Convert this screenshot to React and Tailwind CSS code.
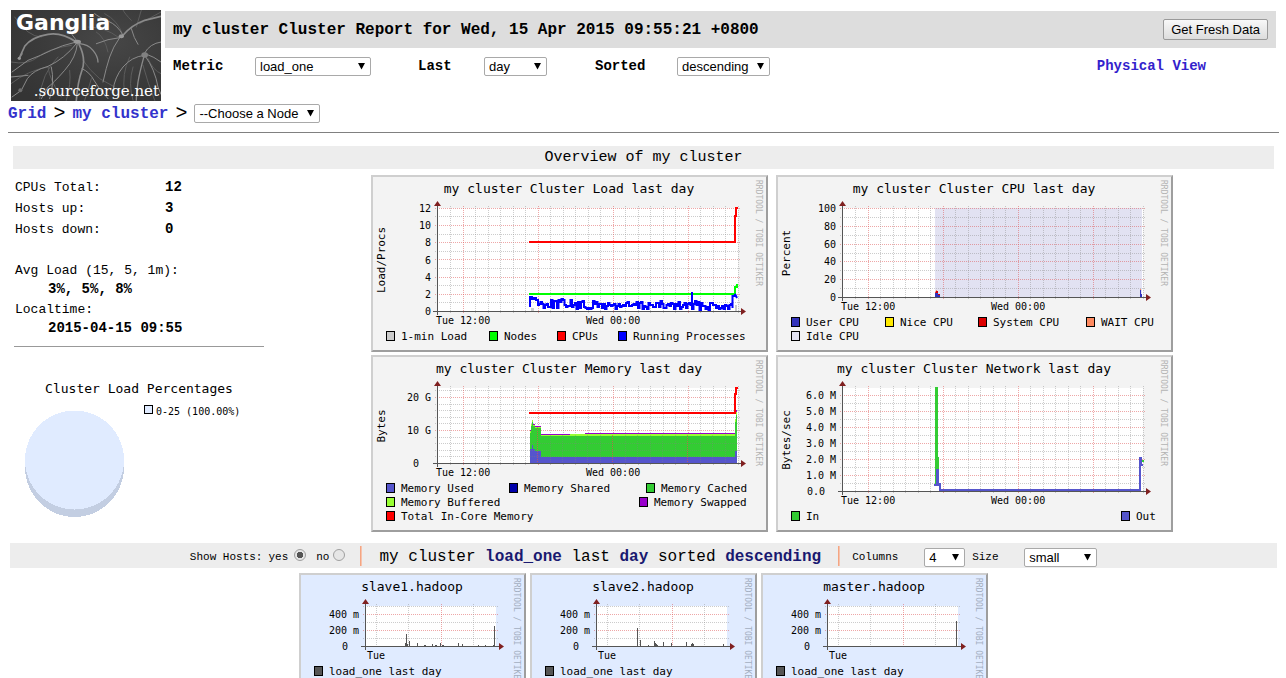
import React, { useState } from 'react';

const MONO = 'DejaVu Sans Mono, monospace';

// Small deterministic generator for the process count line
const buildRunningLine = () => {
    let seed = 7;
    const rand = () => {
        seed = (seed * 1103515245 + 12345) % 2147483648;
        return seed / 2147483648;
    };
    let path = 'M159 132V122H161V124H163V123H165V125H167V130';
    for (let x = 168; x < 362; x += 1.5) {
        const base = x < 200 ? 129 : 131;
        const y = Math.min(135, Math.round(base - 5 + rand() * 9));
        path += `H${x}V${y}`;
        if (x === 321) path += 'V117V134';
    }
    return path + 'V121H364V119L366 123';
};

const runningLine = buildRunningLine();

const Select = ({ id, options, className, ...props }) => (
    <span className={`relative inline-block h-[19px] ${className}`}>
        <select
            id={id}
            className="block w-full h-full appearance-none border border-[#a9a9a9] rounded-xs bg-white pl-1 text-[13px] leading-[17px] font-normal font-['Liberation_Sans',Arial,sans-serif] text-black"
            {...props}
        >
            {options.map((option) => (
                <option key={option}>{option}</option>
            ))}
        </select>
        <svg className="absolute right-1.5 top-1.5 pointer-events-none" width="7" height="7" viewBox="0 0 7 7">
            <path d="M0 0H7L3.5 6.5Z" fill="#000" />
        </svg>
    </span>
);

const Logo = () => (
    <svg width="150" height="91" viewBox="0 0 150 91" className="block shrink-0" role="img" aria-label="Ganglia">
        <defs>
            <radialGradient id="logoBg" cx="0.65" cy="0.35" r="0.8">
                <stop offset="0" stopColor="#474747" />
                <stop offset="0.6" stopColor="#3a3a3a" />
                <stop offset="1" stopColor="#343434" />
            </radialGradient>
        </defs>
        <rect width="150" height="91" fill="url(#logoBg)" />
        <svg width="150" height="91" viewBox="9 9 450 273" fill="none" stroke="#8a8a8a" strokeWidth="3" strokeLinecap="round">
            <g stroke="#5c5c5c">
                <path d="M9 165Q60 175 90 150T190 115" />
                <path d="M9 230Q60 190 120 180" />
                <path d="M120 180Q125 220 160 270" />
                <path d="M150 150Q100 200 95 275" />
                <path d="M225 160Q245 190 275 215L320 240" />
                <path d="M300 135Q290 90 265 75" />
                <path d="M370 40Q350 20 345 9" />
                <path d="M385 60L400 9M395 50L459 15" />
                <path d="M365 150Q340 200 350 260" />
                <path d="M420 155Q435 190 459 200" />
                <path d="M240 60Q290 60 330 90" />
                <path d="M290 20Q330 40 345 85" />
                <path d="M20 30Q60 90 100 90" />
                <path d="M185 190Q190 230 175 280M250 215Q240 250 230 280" />
                <path d="M375 180Q360 230 375 280M405 175Q420 230 440 280" />
            </g>
            <path d="M205 105Q160 75 120 82Q70 90 50 118L33 155L42 140" strokeWidth="5" />
            <path d="M205 105Q160 115 130 130T60 160L12 195" />
            <path d="M205 110Q170 155 120 178Q75 190 58 215L40 250L12 270" />
            <path d="M208 110Q205 150 170 190T120 240L100 275" />
            <path d="M213 112Q235 155 222 190T205 280" strokeWidth="5" />
            <path d="M222 185Q245 195 258 220T300 275" />
            <path d="M215 110Q240 112 255 130T270 165" strokeWidth="4" />
            <path d="M205 100Q190 85 185 65" />
            <path d="M335 92Q315 120 305 150T285 225" />
            <path d="M335 92Q300 95 265 110" />
            <path d="M345 85Q330 55 300 42T260 20" />
            <path d="M345 85Q370 55 410 40L459 28" strokeWidth="5" />
            <path d="M370 65Q378 95 390 112" />
            <path d="M408 145Q370 150 345 180T315 250" />
            <path d="M408 148Q395 195 390 225T385 280" strokeWidth="4" />
            <path d="M412 148Q440 185 450 240L459 262" />
            <path d="M412 140Q440 150 459 165M410 138Q425 110 459 105" />
            <path d="M60 205L9 210M130 180Q140 225 125 275" />
            <g fill="#989898" stroke="none">
                <ellipse cx="208" cy="104" rx="11" ry="6" />
                <ellipse cx="340" cy="88" rx="8" ry="6" />
                <ellipse cx="410" cy="144" rx="10" ry="8" fill="#808080" />
                <circle cx="34" cy="154" r="5" />
                <circle cx="37" cy="250" r="6" fill="#6e6e6e" />
            </g>
        </svg>
        <text x="5" y="20" fontSize="22" fontWeight="bold" fontFamily="DejaVu Sans, sans-serif" fill="#fff">Ganglia</text>
        <text x="148" y="86" fontSize="15" textAnchor="end" fontFamily="DejaVu Serif, serif" fill="#fff">.sourceforge.net</text>
    </svg>
);

// Plot background, axes and titles shared by every graph
const Graph = ({ width, height, bg, title, vertical, plot, rows, cols, labels, times, legend, under, children }) => {
    const { left, right, top, bottom } = plot;
    return (
        <div className={`border-2 border-t-[#cfcfcf] border-l-[#cfcfcf] border-b-[#9e9e9e] border-r-[#9e9e9e] ${bg}`}>
            <svg
                width={width - 4}
                height={height - 4}
                viewBox={`2 2 ${width - 4} ${height - 4}`}
                className="block"
                fontFamily={MONO}
                fontSize="10"
                role="img"
                aria-label={title}
            >
                <rect x={left} y={top} width={right - left} height={bottom - top} fill="#fff" />
                {under}
                <g shapeRendering="crispEdges" strokeDasharray="1 1">
                    {rows.map(([y, major]) => (
                        <path key={y} d={`M${left - 2} ${y + 0.5}H${right + 2}`} stroke={major ? '#de5050' : '#8f8f8f'} strokeOpacity={major ? 0.5 : 0.45} />
                    ))}
                    {cols.map(([x, major]) => (
                        <path key={x} d={`M${x + 0.5} ${top - 2}V${bottom + 2}`} stroke={major ? '#de5050' : '#8f8f8f'} strokeOpacity={major ? 0.5 : 0.45} />
                    ))}
                </g>
                <path d={`M${left - 4} ${bottom + 0.5}H${right + 4}M${left + 0.5} ${top - 4}V${bottom + 4}`} stroke="#555" fill="none" />
                {children}
                <path d={`M${left + 0.5} ${top - 7}l3.5 5h-7zM${right + 8} ${bottom + 0.5}l-5 -3.5v7z`} fill="#802020" />
                <text x={width > 300 ? 198 : 113} y="18" fontSize={13} textAnchor="middle">{title}</text>
                {vertical && (
                    <text transform={`translate(14 ${vertical.y}) rotate(-90)`} fontSize="11" textAnchor="middle">{vertical.text}</text>
                )}
                {labels.map(([text, x, y]) => (
                    <text key={text} x={x} y={y} textAnchor="end">{text}</text>
                ))}
                {times.map(([text, x]) => (
                    <text key={text} x={x} y={bottom + 13}>{text}</text>
                ))}
                {legend.map(([text, color, x, y]) => (
                    <g key={text} fontSize="11">
                        <rect x={x + 0.5} y={y - 8.5} width="8" height="9" fill={color} stroke="#000" />
                        <text x={x + 15} y={y}>{text}</text>
                    </g>
                ))}
                <text transform={`translate(${width - 12} 5) rotate(90)`} fontSize="8" fill={width > 300 ? '#b4b4b4' : '#a3aebf'}>RRDTOOL / TOBI OETIKER</text>
            </svg>
        </div>
    );
};

const dayCols = Array.from({ length: 24 }, (_, i) => [Math.round(79 + 12.5 * i), i % 6 === 1]);
const dayTimes = [['Tue 12:00', 65], ['Wed 00:00', 215]];

const gridRows = (bottom, step, count, majorEvery) =>
    Array.from({ length: count }, (_, i) => [Math.round(bottom - step * (i + 1)), (i + 1) % majorEvery === 0]);

const LoadGraph = () => (
    <Graph
        width={397}
        height={177}
        bg="bg-[#f3f3f3]"
        title="my cluster Cluster Load last day"
        vertical={{ text: 'Load/Procs', y: 85 }}
        plot={{ left: 66, right: 367, top: 33, bottom: 136 }}
        rows={gridRows(136, 8.6, 12, 2)}
        cols={dayCols}
        labels={[['12', 60, 37], ['10', 60, 54], ['8', 60, 71], ['6', 60, 89], ['4', 60, 106], ['2', 60, 123], ['0', 60, 140]]}
        times={dayTimes}
        legend={[
            ['1-min Load', '#cccccc', 15, 165],
            ['Nodes', '#00ff00', 118, 165],
            ['CPUs', '#ff0000', 186, 165],
            ['Running Processes', '#0000ff', 247, 165],
        ]}
    >
        <g fill="none" strokeWidth="2">
            <path d="M160 136v-3h3v3M364 136v-6h2v6" fill="#ccc" stroke="none" />
            <path d="M158 119H364V112H366V109" stroke="#00ff00" />
            <path d={runningLine} stroke="#0000ff" />
            <path d="M158 67H364V41H365V33H367" stroke="#ff0000" />
        </g>
    </Graph>
);

const CpuGraph = () => (
    <Graph
        width={397}
        height={177}
        bg="bg-[#f3f3f3]"
        title="my cluster Cluster CPU last day"
        vertical={{ text: 'Percent', y: 78 }}
        plot={{ left: 66, right: 367, top: 33, bottom: 122 }}
        rows={gridRows(122, 8.9, 10, 2)}
        cols={dayCols}
        labels={[['100', 60, 37], ['80', 60, 55], ['60', 60, 73], ['40', 60, 90], ['20', 60, 108], ['0', 60, 126]]}
        times={dayTimes}
        legend={[
            ['User CPU', '#3333bb', 15, 151],
            ['Nice CPU', '#ffea00', 109, 151],
            ['System CPU', '#dd0000', 202, 151],
            ['WAIT CPU', '#ff8a60', 310, 151],
            ['Idle CPU', '#e2e2f2', 15, 165],
        ]}
        under={<rect x="159" y="33" width="207" height="89" fill="#e2e2f2" />}
    >
        <path d="M159 122v-4l1 -2h2v3h2v3z" fill="#dd0000" />
        <path d="M160 115h1v1h-1zM364 114h1v1h-1z" fill="#ff8a60" />
        <path d="M159 122v-4h3v2h2v2zM364 122v-7h1v4h1v3z" fill="#3333bb" />
    </Graph>
);

const MemoryGraph = () => (
    <Graph
        width={397}
        height={177}
        bg="bg-[#f3f3f3]"
        title="my cluster Cluster Memory last day"
        vertical={{ text: 'Bytes', y: 71 }}
        plot={{ left: 66, right: 367, top: 33, bottom: 108 }}
        rows={gridRows(108, 6.6, 11, 5)}
        cols={dayCols}
        labels={[['20 G', 60, 46], ['10 G', 60, 79], ['0', 48, 112]]}
        times={dayTimes}
        legend={[
            ['Memory Used', '#5555cc', 15, 137],
            ['Memory Shared', '#0000aa', 138, 137],
            ['Memory Cached', '#33cc33', 275, 137],
            ['Memory Buffered', '#99ff33', 15, 151],
            ['Memory Swapped', '#9900cc', 268, 151],
            ['Total In-Core Memory', '#ff0000', 15, 165],
        ]}
    >
        <g shapeRendering="crispEdges">
            <path d="M159 108V76H160V69H161V65H162V70H164V72H170V80H199V79H364V64H365V57H366V108Z" fill="#99ff33" />
            <path d="M159 108V78H160V71H161V67H162V71H164V73H170V81H364V67H365V60H366V108Z" fill="#33cc33" />
            <path d="M159 108V94H161V90H162V94H164V96H170V102H364V96H366V108Z" fill="#5555cc" />
            <path d="M159 75h1v1h-1zM162 69h2v1h-2zM164 71h6v1h-6zM170 79h29v1h-29zM214 78h150v1h-150zM365 55h1v2h-1z" fill="#9900cc" />
            <g strokeDasharray="1 1" stroke="#808080" strokeOpacity="0.35">
                <path d="M159 88.5H366M159 95.5H366M159 101.5H366" />
                <path d="M179.5 80V108M191.5 80V108M204.5 80V108M216.5 80V108M229.5 80V108M254.5 80V108M266.5 80V108M279.5 80V108M291.5 80V108M304.5 80V108M329.5 80V108M341.5 80V108M354.5 80V108" />
                <path d="M166.5 72V108M241.5 80V108M316.5 80V108" stroke="#de5050" strokeOpacity="0.7" />
            </g>
        </g>
        <path d="M158 58H364V39H365V33H367" stroke="#ff0000" strokeWidth="2" fill="none" />
    </Graph>
);

const NetworkGraph = () => (
    <Graph
        width={397}
        height={177}
        bg="bg-[#f3f3f3]"
        title="my cluster Cluster Network last day"
        vertical={{ text: 'Bytes/sec', y: 85 }}
        plot={{ left: 66, right: 367, top: 33, bottom: 136 }}
        rows={gridRows(136, 8, 12, 2)}
        cols={dayCols}
        labels={[['6.0 M', 60, 44], ['5.0 M', 60, 60], ['4.0 M', 60, 76], ['3.0 M', 60, 92], ['2.0 M', 60, 108], ['1.0 M', 60, 124], ['0.0', 49, 140]]}
        times={dayTimes}
        legend={[
            ['In', '#33cc33', 15, 165],
            ['Out', '#5555cc', 345, 165],
        ]}
    >
        <path d="M159 32h3v70h1v28h-4zM366 105h2v2h-2z" fill="#33cc33" />
        <path d="M160 114h3v16h-3z" fill="#5555cc" />
        <path d="M158 130H163V129H164V135H364V103H365V110H367" stroke="#5555cc" strokeWidth="2" fill="none" />
    </Graph>
);

const HostGraph = ({ host, bars }) => (
    <Graph
        width={227}
        height={122}
        bg="bg-[#e0ebff]"
        title={host}
        plot={{ left: 66, right: 197, top: 33, bottom: 73 }}
        rows={gridRows(73, 8, 5, 2)}
        cols={[[77, false], [109, false], [142, true], [174, false]]}
        labels={[['400 m', 60, 45], ['200 m', 60, 61], ['0', 49, 77]]}
        times={[['Tue', 68]]}
        legend={[['load_one last day', '#555555', 15, 102]]}
    >
        {bars.map(([x, h]) => (
            <rect key={x} x={x} y={73 - h} width="1" height={h} fill="#555" />
        ))}
    </Graph>
);

const hosts = [
    { name: 'slave1.hadoop', bars: [[106, 3], [107, 12], [108, 2], [110, 5], [118, 3], [125, 1], [126, 1], [133, 2], [136, 1], [137, 1], [141, 3], [143, 1], [144, 1], [159, 3], [163, 2], [179, 1], [186, 1], [194, 1], [195, 20]] },
    { name: 'slave2.hadoop', bars: [[107, 18], [110, 6], [118, 1], [124, 5], [125, 3], [126, 2], [127, 1], [133, 4], [141, 3], [156, 4], [161, 2], [162, 3], [163, 2], [193, 2]] },
    { name: 'master.hadoop', bars: [[195, 25]] },
];

const LoadPie = () => (
    <svg width="250" height="150" viewBox="0 0 250 150" className="block" fontFamily={MONO} role="img" aria-label="Cluster Load Percentages">
        <text x="125" y="22" fontSize="13" textAnchor="middle">Cluster Load Percentages</text>
        <rect x="130.5" y="34.5" width="8" height="8" fill="#e0ebff" stroke="#000" />
        <text x="142" y="44" fontSize="10">0-25 (100.00%)</text>
        <g shapeRendering="crispEdges">
            <path d="M11 89V96A49.5 50 0 0 0 110 96V89Z" fill="#c3cee2" />
            <circle cx="60.5" cy="89" r="49.5" fill="#e0ebff" />
        </g>
    </svg>
);

const Separator = ({ className }) => (
    <span className={`flex h-5 mb-[3px] ${className}`}>
        <span className="w-px bg-[#f4a582]" />
        <span className="w-px bg-[#f6c3ae]" />
    </span>
);

const App = () => {
    const [metric, setMetric] = useState('load_one');
    const [range, setRange] = useState('day');
    const [sorted, setSorted] = useState('descending');
    const [showHosts, setShowHosts] = useState('yes');

    return (
        <div className="bg-white text-black pl-2 pr-[7px] pt-[10px] font-['Liberation_Mono','Courier_New',monospace] overflow-hidden">
            {/* Header */}
            <div className="flex gap-1 mx-[3px]">
                <Logo />
                <div className="flex-1">
                    <div className="flex items-center justify-between h-[37px] mt-px px-2 bg-[#dddddd]">
                        <h1 className="text-base font-bold">my cluster Cluster Report for Wed, 15 Apr 2015 09:55:21 +0800</h1>
                        <button className="h-[21px] px-[7px] border border-[#9a9a9a] rounded-xs bg-linear-to-b from-[#f8f8f8] to-[#dddddd] text-[13px] leading-[18px] font-['Liberation_Sans',Arial,sans-serif]">
                            Get Fresh Data
                        </button>
                    </div>
                    <div className="flex items-center mt-[9px] pl-2 text-sm leading-[19px] font-bold">
                        <label htmlFor="metric" className="w-[82px]">Metric</label>
                        <Select id="metric" className="w-[116px]" options={['load_one', 'load_five', 'cpu_user']} value={metric} onChange={(e) => setMetric(e.target.value)} />
                        <label htmlFor="range" className="w-[66px] ml-[47px]">Last</label>
                        <Select id="range" className="w-[63px]" options={['hour', 'day', 'week', 'month']} value={range} onChange={(e) => setRange(e.target.value)} />
                        <label htmlFor="sorted" className="w-[82px] ml-[48px]">Sorted</label>
                        <Select id="sorted" className="w-[93px]" options={['ascending', 'descending', 'by name']} value={sorted} onChange={(e) => setSorted(e.target.value)} />
                        <a href="#physical" className="ml-auto mr-[70px] text-[#3322cc]">Physical View</a>
                    </div>
                </div>
            </div>

            <div className="flex items-center gap-[7px] h-[25px] text-base">
                <a href="#grid" className="font-bold text-[#3333cc]">Grid</a>
                <span className="text-xl leading-6">&gt;</span>
                <a href="#cluster" className="font-bold text-[#3333cc]">my cluster</a>
                <span className="text-xl leading-6">&gt;</span>
                <Select aria-label="Node" className="w-[126px]" options={['--Choose a Node', 'slave1.hadoop', 'slave2.hadoop', 'master.hadoop']} />
            </div>
            <hr className="mt-1.5 border-t border-[#808080]" />

            {/* Overview */}
            <h2 className="mt-[13px] mx-[5px] h-[23px] leading-[23px] text-center text-[15px] bg-[#ededed]">Overview of my cluster</h2>
            <div className="flex mt-1.5 ml-1.5">
                <div className="w-[250px] shrink-0">
                    <dl className="pl-px pt-0.5 grid grid-cols-[150px_1fr] text-[13px] leading-[21px]">
                        <dt>CPUs Total:</dt>
                        <dd className="text-sm leading-[21px] font-bold">12</dd>
                        <dt>Hosts up:</dt>
                        <dd className="text-sm leading-[21px] font-bold">3</dd>
                        <dt>Hosts down:</dt>
                        <dd className="text-sm leading-[21px] font-bold">0</dd>
                    </dl>
                    <dl className="pl-px mt-[22px] text-[13px] leading-[18px]">
                        <dt>Avg Load (15, 5, 1m):</dt>
                        <dd className="pl-[33px] text-sm leading-[18px] font-bold">3%, 5%, 8%</dd>
                        <dt className="mt-[3px]">Localtime:</dt>
                        <dd className="pl-[33px] text-sm leading-[18px] font-bold">2015-04-15 09:55</dd>
                    </dl>
                    <hr className="mt-[9px] mb-6 border-t border-[#999999]" />
                    <LoadPie />
                </div>
                <div className="flex-1 flex justify-center">
                    <div className="grid grid-cols-[auto_auto] gap-x-2 gap-y-[3px] self-start">
                        <LoadGraph />
                        <CpuGraph />
                        <MemoryGraph />
                        <NetworkGraph />
                    </div>
                </div>
            </div>

            {/* Host list options */}
            <div className="flex items-center justify-center mt-[11px] mx-0.5 h-[25px] pt-[3px] bg-[#ededed] text-[11px] whitespace-nowrap">
                <span>Show Hosts:</span>
                <label htmlFor="hosts-yes" className="ml-1.5">yes</label>
                <input
                    id="hosts-yes"
                    type="radio"
                    name="hosts"
                    className="appearance-none size-3 ml-1.5 mb-1 rounded-full border border-[#a0a0a0] bg-[#e6e6e6] checked:bg-[radial-gradient(#555_0_3px,#e6e6e6_3px)]"
                    checked={showHosts === 'yes'}
                    onChange={() => setShowHosts('yes')}
                />
                <label htmlFor="hosts-no" className="ml-2.5">no</label>
                <input
                    id="hosts-no"
                    type="radio"
                    name="hosts"
                    className="appearance-none size-3 ml-1 mb-1 rounded-full border border-[#a0a0a0] bg-[#e6e6e6] checked:bg-[radial-gradient(#555_0_3px,#e6e6e6_3px)]"
                    checked={showHosts === 'no'}
                    onChange={() => setShowHosts('no')}
                />
                <Separator className="ml-[15px]" />
                <span className="mx-[17px] text-base leading-5">
                    my cluster <b className="text-[#191970]">load_one</b> last <b className="text-[#191970]">day</b> sorted <b className="text-[#191970]">descending</b>
                </span>
                <Separator />
                <label htmlFor="columns" className="ml-3 w-[72px]">Columns</label>
                <Select id="columns" className="w-[41px]" options={['1', '2', '3', '4', '5']} defaultValue="4" />
                <label htmlFor="size" className="ml-[7px] w-[52px]">Size</label>
                <Select id="size" className="w-[73px]" options={['small', 'medium', 'large']} defaultValue="small" />
            </div>

            {showHosts === 'yes' && (
                <div className="flex justify-center gap-1 mt-[5px]">
                    {hosts.map((host) => (
                        <HostGraph key={host.name} host={host.name} bars={host.bars} />
                    ))}
                </div>
            )}
        </div>
    );
};

export default App;
